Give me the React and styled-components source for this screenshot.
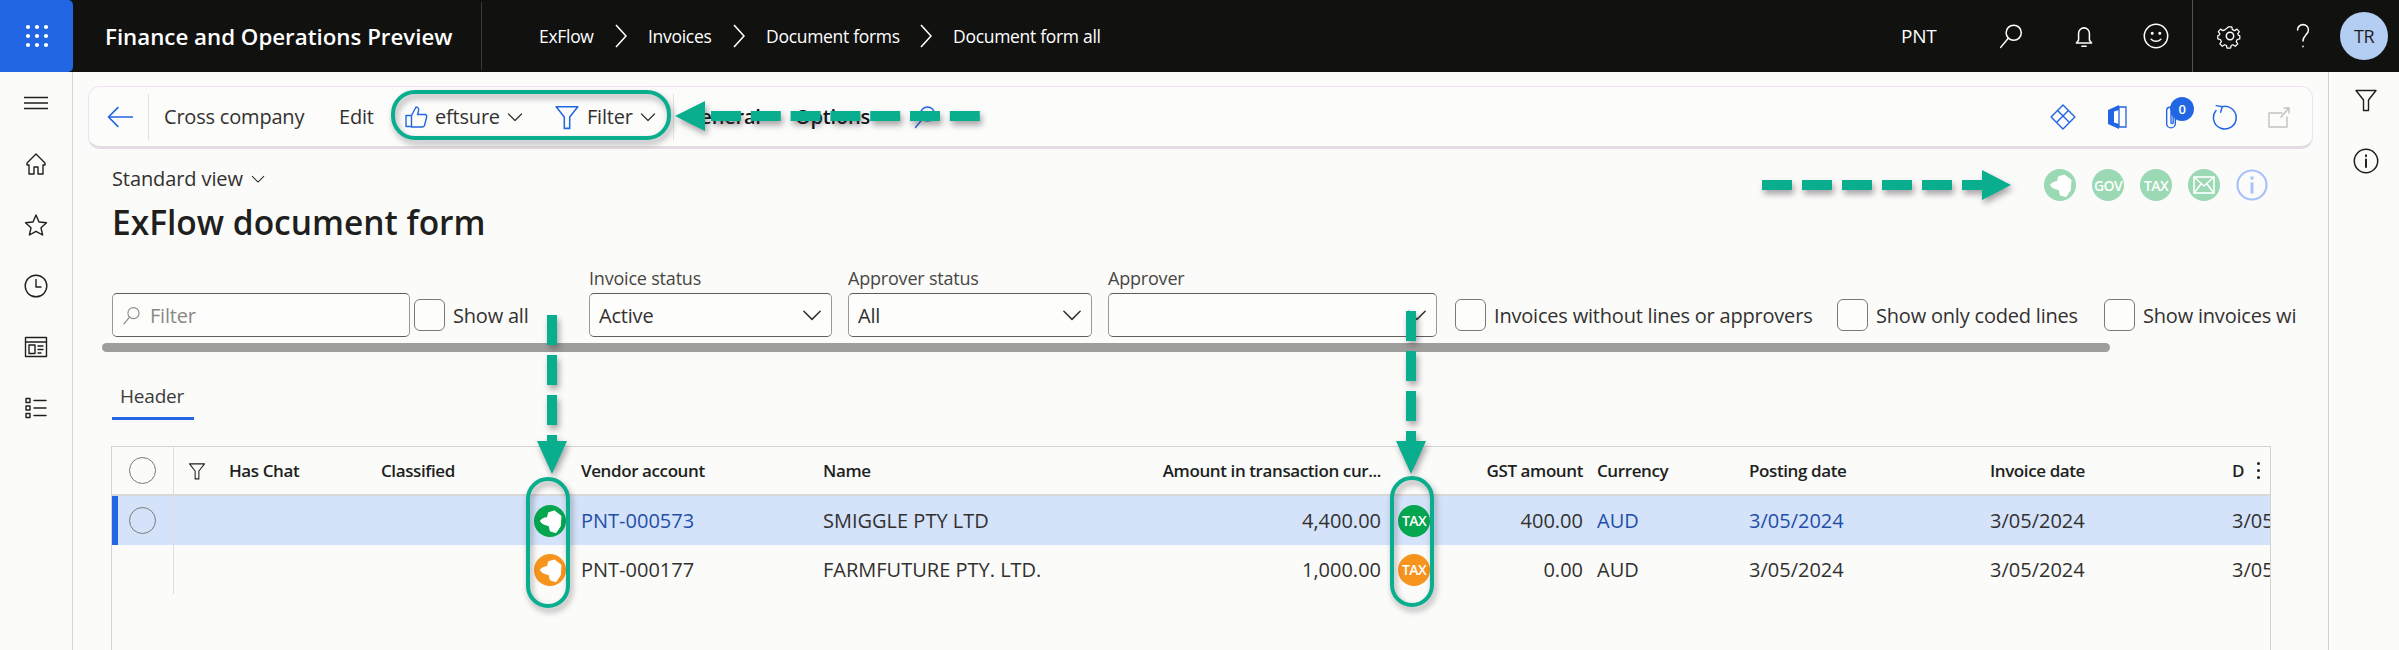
import React from "react";
import styled, { createGlobalStyle } from "styled-components";

const GlobalStyle = createGlobalStyle`
  html, body {
    margin: 0;
    padding: 0;
    overflow: hidden;
    background: #fbfbf9;
  }
  body {
    font-family: "Open Sans", "Noto Sans", sans-serif;
    color: #323130;
  }
  * { box-sizing: border-box; }
`;

const Page = styled.div`
  position: relative;
  width: 2399px;
  height: 650px;
  display: flex;
  flex-direction: column;
  overflow: hidden;
`;

const TopBar = styled.header`
  height: 72px;
  flex: none;
  background: #111110;
  color: #fff;
  display: flex;
  align-items: center;
`;

const Waffle = styled.div`
  width: 73px;
  height: 72px;
  background: #2266e3;
  border-radius: 0 5px 5px 0;
  display: flex;
  align-items: center;
  justify-content: center;
`;

const AppTitle = styled.div`
  width: 409px;
  height: 68px;
  padding-left: 32px;
  font-size: 22.3px;
  font-weight: 600;
  line-height: 70px;
  white-space: nowrap;
  border-right: 1px solid #3b3a39;
`;

const Breadcrumbs = styled.nav`
  display: flex;
  align-items: center;
  margin-left: 57px;
  font-size: 17.5px;
  letter-spacing: -0.3px;
`;

const Crumb = styled.span`
  width: ${(p) => p.$w}px;
  white-space: nowrap;
`;

const CrumbArrow = styled.span`
  width: 55px;
  display: flex;
  justify-content: center;
`;

const TopRight = styled.div`
  margin-left: auto;
  display: flex;
  align-items: center;
  height: 72px;
`;

const Company = styled.span`
  font-size: 19px;
  width: 73px;
  letter-spacing: -0.3px;
`;

const TopIcon = styled.div`
  width: 73px;
  height: 72px;
  display: flex;
  align-items: center;
  justify-content: center;
  border-right: ${(p) => (p.$divider ? "1px solid #55544f" : "none")};
`;

const Avatar = styled.div`
  width: 48px;
  height: 48px;
  margin: 0 11px 0 1px;
  border-radius: 50%;
  background: #b4cdf3;
  color: #1f1f1f;
  font-size: 18px;
  display: flex;
  align-items: center;
  justify-content: center;
  letter-spacing: -0.5px;
`;

const Body = styled.div`
  flex: 1;
  display: flex;
  min-height: 0;
`;

const LeftNav = styled.nav`
  width: 73px;
  flex: none;
  border-right: 1px solid #e0d2d6;
  display: flex;
  flex-direction: column;
  align-items: center;
  padding-top: 19px;
  gap: 37px;
  color: #201f1e;
`;

const NavIcon = styled.div`
  width: 24px;
  height: 24px;
  display: flex;
  align-items: center;
  justify-content: center;
`;

const Main = styled.main`
  flex: 1;
  min-width: 0;
  display: flex;
  flex-direction: column;
`;

const RightPane = styled.aside`
  width: 71px;
  flex: none;
  border-left: 1px solid #d4d0cf;
  display: flex;
  flex-direction: column;
  align-items: center;
  padding: 16px 0 0 3px;
  gap: 36px;
  color: #201f1e;
`;

const ActionPane = styled.div`
  margin: 14px 15px 0;
  height: 63px;
  flex: none;
  display: flex;
  align-items: center;
  background: #fcfcfb;
  border: 1px solid #f0e2f0;
  border-bottom: 3px solid #e6dbe2;
  border-radius: 12px;
  font-size: 20px;
  letter-spacing: -0.2px;
  white-space: nowrap;
`;

const BackButton = styled.div`
  width: 60px;
  height: 46px;
  display: flex;
  align-items: center;
  justify-content: center;
  border-right: 1px solid #e4e0e2;
  color: #2266e3;
`;

const ActionItem = styled.div`
  display: flex;
  align-items: center;
  flex: none;
  gap: ${(p) => p.$gap ?? 7}px;
  margin-left: ${(p) => p.$left}px;
  width: ${(p) => (p.$w ? `${p.$w}px` : "auto")};
  font-weight: ${(p) => (p.$bold ? 600 : 400)};
  color: ${(p) => (p.$bold ? "#111" : "inherit")};
`;

const ActionDivider = styled.span`
  width: 1px;
  height: 46px;
  margin-left: 16px;
  background: #e4e0e2;
`;

const ActionRight = styled.div`
  margin-left: auto;
  margin-right: 6px;
  display: flex;
  align-items: center;
`;

const ActionIcon = styled.div`
  position: relative;
  width: 54px;
  display: flex;
  justify-content: center;
  color: #2266e3;
`;

const Badge = styled.span`
  position: absolute;
  top: -7px;
  left: 26px;
  width: 24px;
  height: 24px;
  border-radius: 50%;
  background: #2266e3;
  color: #fff;
  font-size: 13px;
  font-weight: 600;
  display: flex;
  align-items: center;
  justify-content: center;
`;

const HeaderArea = styled.div`
  position: relative;
  flex: none;
  padding: 18px 0 0 39px;
`;

const ViewName = styled.div`
  height: 24px;
  font-size: 20px;
  line-height: 24px;
  letter-spacing: -0.1px;
  display: flex;
  align-items: center;
  gap: 8px;
`;

const PageTitle = styled.h1`
  margin: 9px 0 0;
  height: 45px;
  font-size: 33.5px;
  line-height: 45px;
  font-weight: 600;
  color: #201f1e;
`;

const StatusIcons = styled.div`
  position: absolute;
  top: 20px;
  left: 1971px;
  display: flex;
  gap: 16px;
`;

const Dot = styled.div`
  width: 32px;
  height: 32px;
  flex: none;
  border-radius: 50%;
  background: ${(p) => p.$color};
  color: #fff;
  font-size: 14px;
  font-weight: 600;
  letter-spacing: -0.6px;
  display: flex;
  align-items: center;
  justify-content: center;
`;

const FilterRow = styled.div`
  flex: none;
  margin: 22px 0 0 39px;
  height: 70px;
  display: flex;
  align-items: flex-end;
  overflow: hidden;
  width: 2188px;
  font-size: 20px;
  letter-spacing: -0.2px;
  white-space: nowrap;
`;

const Field = styled.div`
  width: ${(p) => p.$w}px;
  margin-left: ${(p) => p.$left || 0}px;
  flex: none;
`;

const FieldLabel = styled.div`
  height: 26px;
  font-size: 18px;
  line-height: 22px;
  color: #484644;
`;

const Control = styled.div`
  height: 44px;
  padding: 0 9px;
  display: flex;
  align-items: center;
  justify-content: space-between;
  border: 1px solid #9a9997;
  border-top-color: #605e5c;
  border-bottom-color: #605e5c;
  border-radius: 5px;
  background: #fdfdfc;
  color: ${(p) => (p.$muted ? "#8a8886" : "#323130")};
`;

const SearchControl = styled(Control)`
  justify-content: flex-start;
  gap: 9px;
`;

const CheckField = styled.label`
  height: 44px;
  width: ${(p) => (p.$w ? `${p.$w}px` : "auto")};
  flex: none;
  margin-left: ${(p) => p.$left}px;
  display: flex;
  align-items: center;
  gap: 8px;
`;

const CheckBox = styled.span`
  width: 31px;
  height: 32px;
  flex: none;
  border: 1px solid #7b7977;
  border-radius: 6px;
  background: #fdfdfc;
`;

const ScrollTrack = styled.div`
  flex: none;
  margin: 6px 0 0 29px;
  width: 2008px;
  height: 9px;
  border-radius: 5px;
  background: #9e9e9c;
`;

const Tabs = styled.div`
  flex: none;
  margin: 27px 0 0 39px;
  width: 82px;
  height: 41px;
  padding: 3px 0 0 8px;
  font-size: 19px;
  letter-spacing: -0.2px;
  line-height: 28px;
  color: #3b3a39;
  border-bottom: 3px solid #2266e3;
`;

const GridFrame = styled.section`
  flex: 1;
  margin: 26px 57px 0 38px;
  border: 1px solid #d5d3d1;
  border-bottom: none;
  overflow: hidden;
  font-size: 20px;
  white-space: nowrap;
`;

const GridRow = styled.div`
  display: grid;
  grid-template-columns: 62px 55px 152px 200px 242px 300px 258px 202px 14px 152px 241px 242px 39px;
  align-items: center;
  height: 49px;
  background: ${(p) => (p.$selected ? "#d4e3fa" : "transparent")};
  box-shadow: ${(p) => (p.$selected ? "inset 6px 0 0 #2266e3" : "none")};
  border-bottom: ${(p) => (p.$head ? "2px solid #d9d8d6" : "none")};
  font-weight: ${(p) => (p.$head ? 600 : 400)};
  color: ${(p) => (p.$head ? "#201f1e" : "#323130")};
  font-size: ${(p) => (p.$head ? "17px" : "inherit")};
  letter-spacing: ${(p) => (p.$head ? "-0.4px" : "0")};
`;

const SelectCell = styled.div`
  height: 100%;
  display: flex;
  align-items: center;
  justify-content: center;
  border-right: 1px solid #e5dbe5;
`;

const Radio = styled.span`
  width: 27px;
  height: 27px;
  border-radius: 50%;
  border: 1px solid #7a7876;
`;

const Cell = styled.div`
  overflow: ${(p) => (p.$clip ? "hidden" : "visible")};
  text-align: ${(p) => (p.$right ? "right" : "left")};
  color: ${(p) => (p.$link ? "#1f4fa8" : "inherit")};
`;

const FunnelCell = styled.div`
  display: flex;
  padding-left: 14px;
`;

const IconCell = styled.div`
  display: flex;
  justify-content: flex-end;
  padding-right: 15px;
`;

const GstCell = styled.div`
  display: flex;
  align-items: center;
  justify-content: space-between;
  padding-left: 17px;
`;

const LastHead = styled.div`
  display: flex;
  align-items: center;
  justify-content: space-between;
  padding-right: 11px;
`;

const Kebab = styled.span`
  display: flex;
  flex-direction: column;
  gap: 4px;
  & i {
    width: 3px;
    height: 3px;
    background: #201f1e;
    border-radius: 50%;
  }
`;

const Annotations = styled.svg`
  position: absolute;
  top: 0;
  left: 0;
  pointer-events: none;
  filter: drop-shadow(2px 4px 3px rgba(60, 50, 60, 0.45));
`;

const stroke = {
  fill: "none",
  stroke: "currentColor",
  strokeWidth: 1.4,
  strokeLinecap: "round",
  strokeLinejoin: "round",
};

const Icon = ({ s = 24, children, ...rest }) => (
  <svg width={s} height={s} viewBox="0 0 24 24" {...stroke} {...rest}>
    {children}
  </svg>
);

const Chevron = ({ s = 16 }) => (
  <svg width={s} height={s} viewBox="0 0 16 16" {...stroke} strokeWidth={1.2}>
    <path d="M1.5 5 8 11.5 14.5 5" />
  </svg>
);

const CrumbChevron = () => (
  <svg width="12" height="24" viewBox="0 0 12 24" fill="none" stroke="#fff" strokeWidth="1.6">
    <path d="m1 1 10 11L1 23" />
  </svg>
);

const Funnel = ({ s = 24, color }) => (
  <Icon s={s} color={color}>
    <path d="M2 2.5h20L14.5 12v10.5h-5V12z" />
  </Icon>
);

const SearchGlyph = ({ s = 24, color }) => (
  <Icon s={s} color={color}>
    <circle cx="14.5" cy="9" r="7" />
    <path d="M9.5 14 2.5 22.5" />
  </Icon>
);

const Hand = () => (
  <svg width="32" height="32" viewBox="0 0 32 32">
    <path
      d="M6.5 16.5c0-2 3-3.800 7-3.800l1-5L20.500 6 27 11l-.7 10-4.300 6.700-5.700-1.700-1-5-6.500-2.300z"
      fill="#fff"
      stroke="#fff"
      strokeLinejoin="round"
    />
  </svg>
);

const Mail = () => (
  <svg width="22" height="18" viewBox="0 0 22 18" fill="none" stroke="#fff" strokeWidth="1.6">
    <rect x="1" y="1" width="20" height="16" />
    <path d="m1 1 10 9 10-9M1 17l7-9M21 17l-7-9" />
  </svg>
);

const crumbs = [
  ["ExFlow", 54],
  ["Invoices", 63],
  ["Document forms", 132],
  ["Document form all", 150],
];

const rows = [
  {
    id: 1,
    selected: true,
    color: "#04a650",
    account: "PNT-000573",
    name: "SMIGGLE PTY LTD",
    amount: "4,400.00",
    gst: "400.00",
  },
  {
    id: 2,
    color: "#f7941d",
    account: "PNT-000177",
    name: "FARMFUTURE PTY. LTD.",
    amount: "1,000.00",
    gst: "0.00",
  },
];

const dashes = (count, start, step, fn) =>
  Array.from({ length: count }, (_, i) => fn(start + i * step, i));

function App() {
  return (
    <Page>
      <GlobalStyle />
      <TopBar>
        <Waffle>
          <svg width="24" height="24" viewBox="0 0 24 24" fill="#fff">
            {[3, 12, 21].map((y) =>
              [3, 12, 21].map((x) => <circle key={`${x}-${y}`} cx={x} cy={y} r="2.1" />)
            )}
          </svg>
        </Waffle>
        <AppTitle>Finance and Operations Preview</AppTitle>
        <Breadcrumbs>
          {crumbs.map(([label, w], i) => (
            <React.Fragment key={label}>
              <Crumb $w={w}>{label}</Crumb>
              {i < crumbs.length - 1 && (
                <CrumbArrow>
                  <CrumbChevron />
                </CrumbArrow>
              )}
            </React.Fragment>
          ))}
        </Breadcrumbs>
        <TopRight>
          <Company>PNT</Company>
          <TopIcon>
            <SearchGlyph s={26} />
          </TopIcon>
          <TopIcon>
            <Icon s={26}>
              <path d="M5 18.5h14l-2-2.500V9.500a5 5 0 0 0-10 0V16zM10 21.500h4" />
            </Icon>
          </TopIcon>
          <TopIcon $divider>
            <Icon s={26}>
              <circle cx="12" cy="12" r="10.8" />
              <circle cx="8.5" cy="9.5" r=".7" />
              <circle cx="15.5" cy="9.5" r=".7" />
              <path d="M7.5 15c2.500 2.600 6.500 2.600 9 0" />
            </Icon>
          </TopIcon>
          <TopIcon>
            <Icon s={26}>
              <circle cx="12" cy="12" r="3.4" />
              <path
                d="m10 1.800h4l.6 3 2.600 1.100 2.600-1.700 2.600 2.800-1.700 2.600.7 1.400 1.600.7v3.400l-3 .8-1 2.300 1.700 2.600-2.800 2.700-2.600-1.700-2.100.9-.6 2.800h-4l-.6-2.800-2.100-.9-2.600 1.700-2.800-2.700 1.700-2.600-1-2.300-3-.8v-3.400l1.600-.7.7-1.400-1.700-2.600 2.600-2.800 2.600 1.700 2.600-1.100z"
                transform="translate(2.2 2.2) scale(.82)"
              />
            </Icon>
          </TopIcon>
          <TopIcon>
            <Icon s={26}>
              <path d="M7 6.500C7 3.500 9.200 1.500 12 1.500s5 2 5 5c0 4.400-5 5-5 10M12 21.500v.5" />
            </Icon>
          </TopIcon>
          <Avatar>TR</Avatar>
        </TopRight>
      </TopBar>
      <Body>
        <LeftNav>
          <NavIcon>
            <Icon>
              <path d="M0 6.500h24M0 12h24M0 17.500h24" />
            </Icon>
          </NavIcon>
          <NavIcon>
            <Icon>
              <path d="M12 2 3 11v2h2v9h5v-7h4v7h5v-9h2v-2z" />
            </Icon>
          </NavIcon>
          <NavIcon>
            <Icon>
              <path d="m12 2 3 7 7.500.8-5.500 5 1.600 7.200-6.600-3.700-6.600 3.700 1.600-7.200-5.500-5L9 9z" />
            </Icon>
          </NavIcon>
          <NavIcon>
            <Icon>
              <circle cx="12" cy="12" r="10.8" />
              <path d="M12 5.500V13h5" />
            </Icon>
          </NavIcon>
          <NavIcon>
            <Icon>
              <path d="M1.500 2.500h21v19h-21zM1.500 7h21" />
              <path d="M5 10h6v8.500H5zM14 11h5M14 14.500h5M14 18h3" />
            </Icon>
          </NavIcon>
          <NavIcon>
            <Icon>
              <path d="M2 2.500h4v4H2zM2 10h4v4H2zM2 17.500h4v4H2zM10 4.500h12M10 12h12M10 19.500h12" />
            </Icon>
          </NavIcon>
        </LeftNav>
        <Main>
          <ActionPane>
            <BackButton>
              <Icon s={28}>
                <path d="M24 12H3M11 4l-8 8 8 8" />
              </Icon>
            </BackButton>
            <ActionItem $left={15} $w={142}>Cross company</ActionItem>
            <ActionItem $left={33} $w={34}>Edit</ActionItem>
            <ActionItem $left={31} $w={120} $gap={7}>
              <Icon s={24} color="#2266e3">
                <path d="M7.500 10.500 12 2c2.500 0 3 2 2.500 4l-1 3.500H21c1.500 0 2 1.500 1.500 3l-2 8c-.4 1-1 1.500-2.500 1.500H7.500zM2 10.500h5.500v11H2z" />
              </Icon>
              eftsure
              <Chevron />
            </ActionItem>
            <ActionItem $left={30} $w={103} $gap={7}>
              <Funnel s={26} color="#2266e3" />
              Filter
              <Chevron />
            </ActionItem>
            <ActionDivider />
            <ActionItem $left={12} $w={78} $bold>General</ActionItem>
            <ActionItem $left={31} $w={76} $bold>Options</ActionItem>
            <ActionItem $left={42}>
              <SearchGlyph s={24} color="#2266e3" />
            </ActionItem>
            <ActionRight>
              <ActionIcon>
                <Icon s={26} strokeWidth="1.3">
                  <path d="M12 1 23 12 12 23 1 12zM7 6l11 11M17 6 6 17" />
                </Icon>
              </ActionIcon>
              <ActionIcon>
                <svg width="20" height="26" viewBox="0 0 20 26">
                  <path d="M1 6 12 1v24L1 20z" fill="#2266e3" />
                  <path d="M7 7.500 12 6v14l-5-1.500z" fill="#fff" />
                  <path d="M12 3h7v20h-7z" fill="none" stroke="#2266e3" strokeWidth="1.3" />
                </svg>
              </ActionIcon>
              <ActionIcon>
                <Icon s={26} strokeWidth="1.3">
                  <path d="M16 8v10a4 4 0 0 1-8 0V6a3 3 0 0 1 6 0v11a1 1 0 0 1-2 0V8" />
                </Icon>
                <Badge>0</Badge>
              </ActionIcon>
              <ActionIcon>
                <Icon s={26}>
                  <path d="M9 2.500A10.500 10.500 0 1 1 3.700 6M8 7.500 9.500 2.500 4 1.500" />
                </Icon>
              </ActionIcon>
              <ActionIcon>
                <Icon s={24} color="#c2c1bf">
                  <path d="M15 8H2v14h18V12M14 12l8-9M17 3h5v5" />
                </Icon>
              </ActionIcon>
            </ActionRight>
          </ActionPane>
          <HeaderArea>
            <ViewName>
              Standard view
              <Chevron s={14} />
            </ViewName>
            <PageTitle>ExFlow document form</PageTitle>
            <StatusIcons>
              <Dot $color="#9ad9b3">
                <Hand />
              </Dot>
              <Dot $color="#9ad9b3">GOV</Dot>
              <Dot $color="#9ad9b3">TAX</Dot>
              <Dot $color="#9ad9b3">
                <Mail />
              </Dot>
              <Dot $color="transparent">
                <svg width="32" height="32" viewBox="0 0 32 32" fill="none" stroke="#a9c3f8" strokeWidth="2.2">
                  <circle cx="16" cy="16" r="14.5" />
                  <path d="M16 13.500v11M16 7.500v3" strokeWidth="3" />
                </svg>
              </Dot>
            </StatusIcons>
          </HeaderArea>
          <FilterRow>
            <Field $w={298}>
              <SearchControl $muted>
                <SearchGlyph s={19} />
                Filter
              </SearchControl>
            </Field>
            <CheckField $left={4} $w={116}>
              <CheckBox />
              Show all
            </CheckField>
            <Field $w={243} $left={59}>
              <FieldLabel>Invoice status</FieldLabel>
              <Control>
                Active
                <Chevron s={20} />
              </Control>
            </Field>
            <Field $w={244} $left={16}>
              <FieldLabel>Approver status</FieldLabel>
              <Control>
                All
                <Chevron s={20} />
              </Control>
            </Field>
            <Field $w={329} $left={16}>
              <FieldLabel>Approver</FieldLabel>
              <Control>
                <span />
                <Chevron s={20} />
              </Control>
            </Field>
            <CheckField $left={18} $w={361}>
              <CheckBox />
              Invoices without lines or approvers
            </CheckField>
            <CheckField $left={21} $w={245}>
              <CheckBox />
              Show only coded lines
            </CheckField>
            <CheckField $left={22}>
              <CheckBox />
              Show invoices wi
            </CheckField>
          </FilterRow>
          <ScrollTrack />
          <Tabs>Header</Tabs>
          <GridFrame>
            <GridRow $head>
              <SelectCell>
                <Radio />
              </SelectCell>
              <FunnelCell>
                <Funnel s={18} />
              </FunnelCell>
              <Cell>Has Chat</Cell>
              <Cell>Classified</Cell>
              <Cell>Vendor account</Cell>
              <Cell>Name</Cell>
              <Cell $right>Amount in transaction cur...</Cell>
              <Cell $right>GST amount</Cell>
              <span />
              <Cell>Currency</Cell>
              <Cell>Posting date</Cell>
              <Cell>Invoice date</Cell>
              <LastHead>
                D
                <Kebab>
                  <i />
                  <i />
                  <i />
                </Kebab>
              </LastHead>
            </GridRow>
            {rows.map((row) => (
              <GridRow key={row.id} $selected={row.selected}>
                <SelectCell>{row.selected && <Radio />}</SelectCell>
                <span />
                <span />
                <IconCell>
                  <Dot $color={row.color}>
                    <Hand />
                  </Dot>
                </IconCell>
                <Cell $link={row.selected}>{row.account}</Cell>
                <Cell>{row.name}</Cell>
                <Cell $right>{row.amount}</Cell>
                <GstCell>
                  <Dot $color={row.color}>TAX</Dot>
                  {row.gst}
                </GstCell>
                <span />
                <Cell $link={row.selected}>AUD</Cell>
                <Cell $link={row.selected}>3/05/2024</Cell>
                <Cell>3/05/2024</Cell>
                <Cell $clip>3/05/2024</Cell>
              </GridRow>
            ))}
          </GridFrame>
        </Main>
        <RightPane>
          <Funnel s={24} />
          <Icon s={26}>
            <circle cx="12" cy="12" r="10.8" />
            <path d="M12 10.500v7M12 6.600v1" strokeWidth="1.8" />
          </Icon>
        </RightPane>
      </Body>
      <Annotations width="2399" height="650" viewBox="0 0 2399 650">
        <g fill="none" stroke="#08ae8d" strokeWidth="4">
          <rect x="393" y="92" width="276" height="46" rx="22" />
          <rect x="528" y="479" width="40" height="127" rx="20" />
          <rect x="1392" y="478" width="40" height="127" rx="20" />
        </g>
        <g fill="#08ae8d">
          <path d="M675 116 705 101v30z" />
          {dashes(7, 711, 39.8, (x, i) => (
            <rect key={i} x={x} y="111" width="30" height="10" />
          ))}
          {dashes(5, 1762, 40, (x, i) => (
            <rect key={i} x={x} y="180" width="30" height="10" />
          ))}
          <path d="M1962 180h20v-10l29 15-29 15v-10h-20z" />
          {dashes(3, 315, 40, (y, i) => (
            <rect key={i} x="547" y={y} width="10" height="30" />
          ))}
          <path d="M547 435h10v6h10l-15 33-15-33h10z" />
          {dashes(3, 311, 40, (y, i) => (
            <rect key={i} x="1406" y={y} width="10" height="30" />
          ))}
          <path d="M1406 431h10v10h10l-15 33-15-33h10z" />
        </g>
      </Annotations>
    </Page>
  );
}

export default App;
